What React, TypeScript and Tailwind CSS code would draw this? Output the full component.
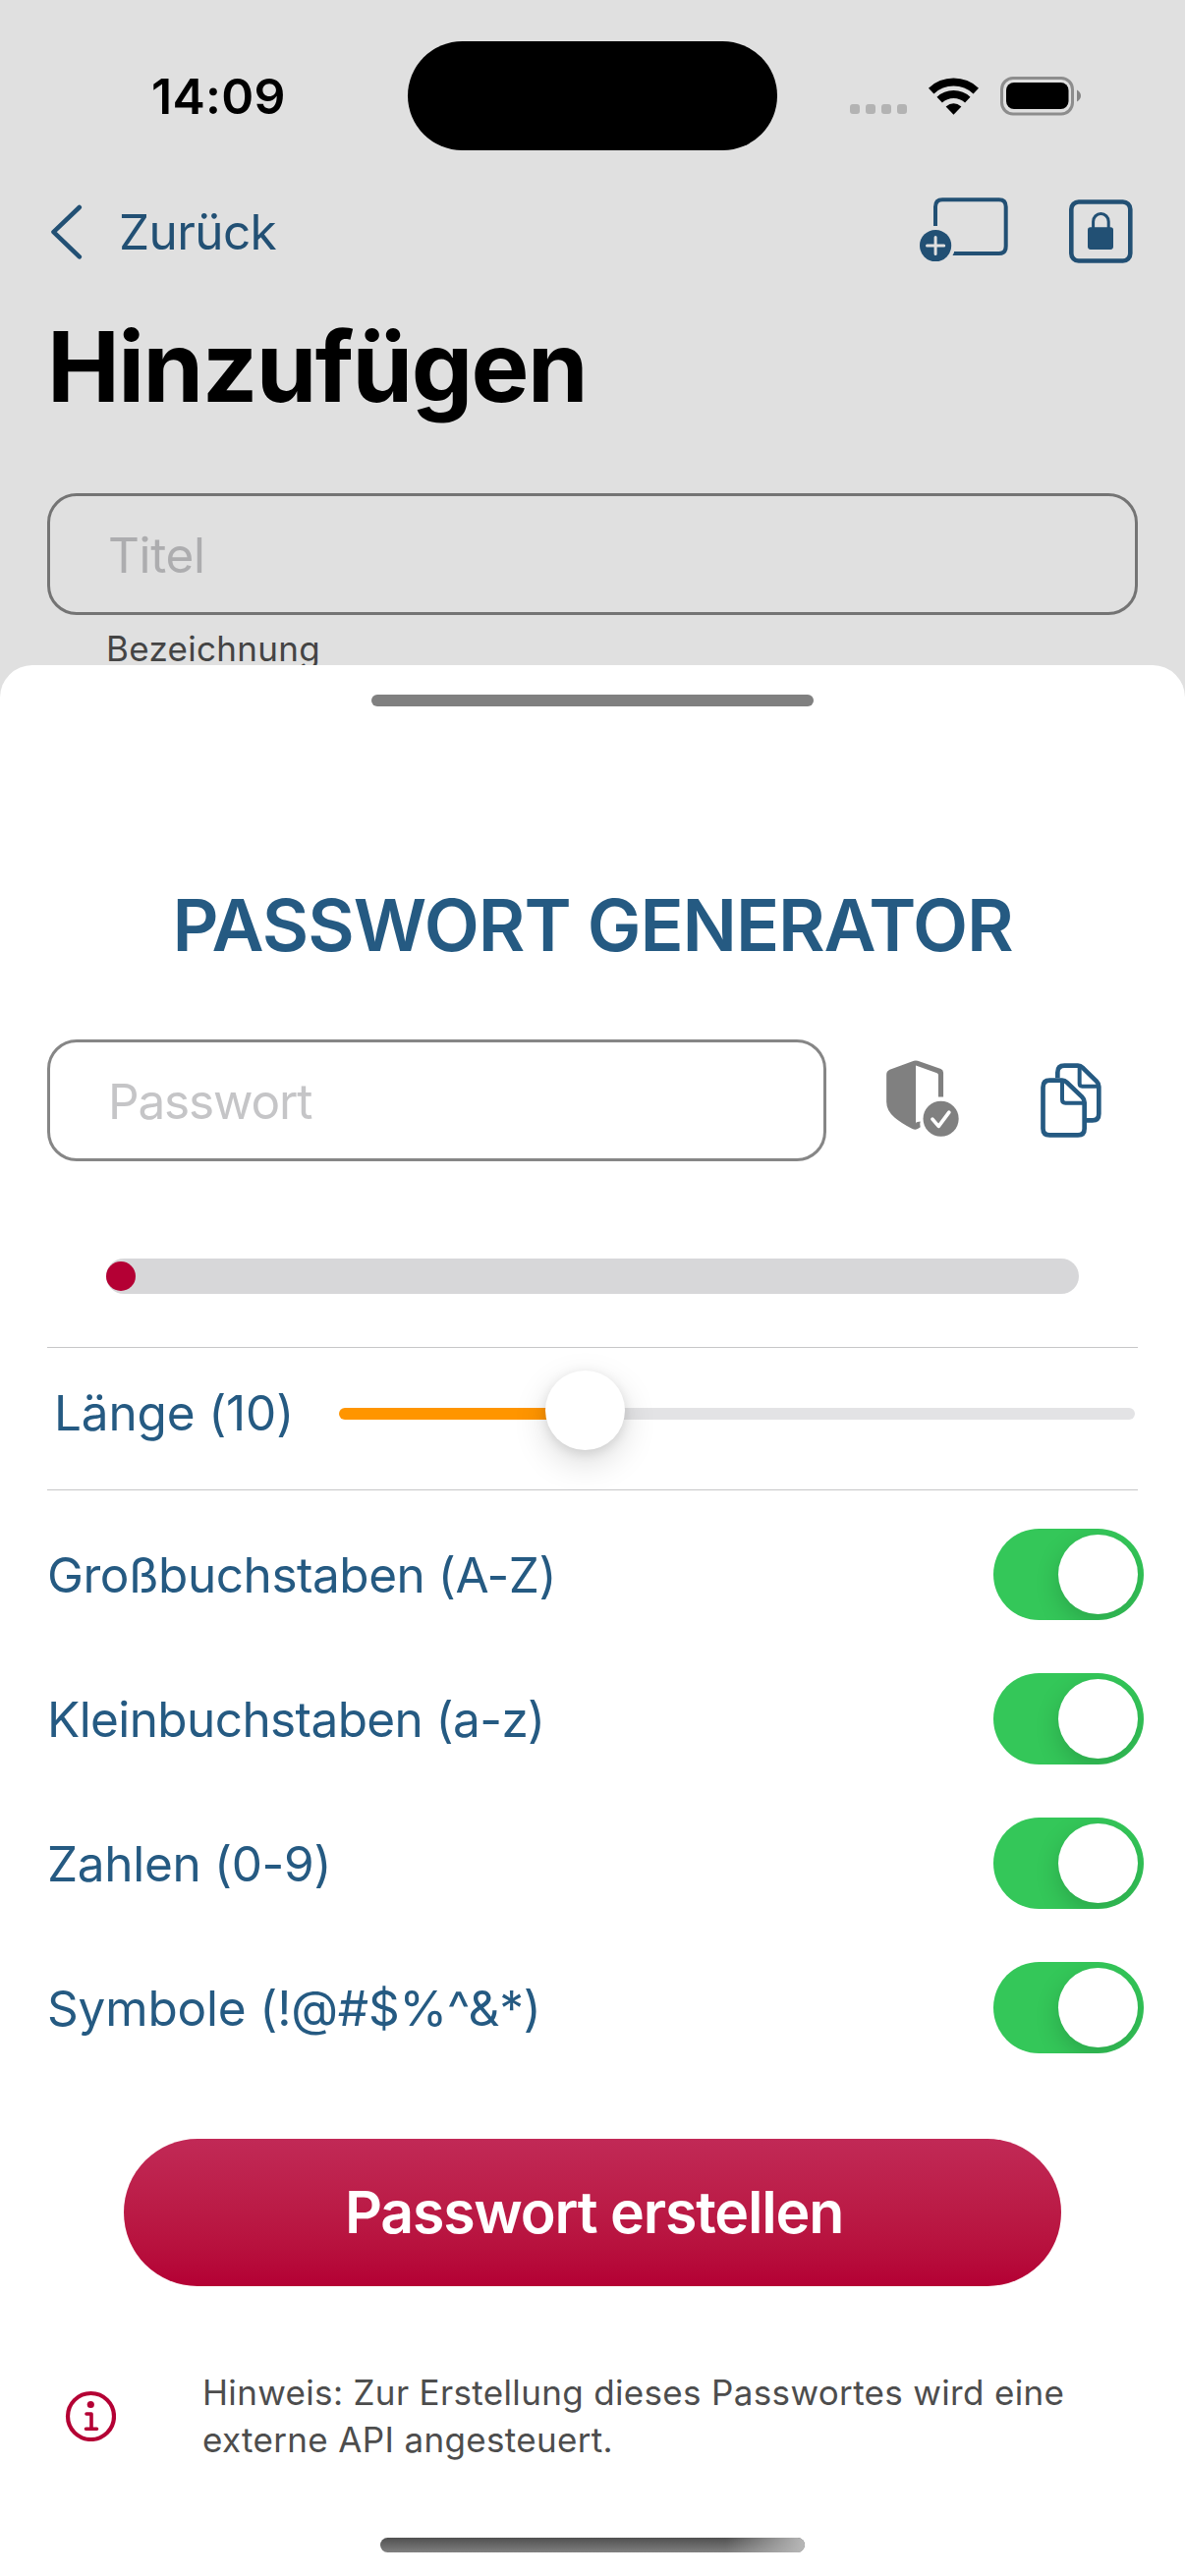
import { useState } from "react";

function StatusBar() {
  return (
    <div className="flex h-[194px] items-center">
      <time className="ml-[154px] mt-[2px] w-[261px] text-[50px] leading-[60px] font-semibold tracking-[0.28px] text-black">
        14:09
      </time>
      <div className="h-[111px] w-[376px] rounded-full bg-black" />
      <div className="mt-[28px] ml-[74px] flex gap-[6px]">
        {[0, 1, 2, 3].map((dot) => (
          <span key={dot} className="size-[10px] rounded-[3px] bg-[#b3b3b3]" />
        ))}
      </div>
      <svg className="mt-[2px] ml-[21px] h-[38px] w-[52px]" viewBox="944 78.5 52 38" fill="none">
        <g stroke="#000" strokeWidth="8">
          <path d="M947.7 92.1a33.4 33.4 0 0 1 45.6 0" />
          <path d="M956.2 101.1a21 21 0 0 1 28.6 0" />
        </g>
        <path d="M962.6 108.1q7.9-6.600 15.8 0l-7.900 8.200z" fill="#000" />
      </svg>
      <svg className="mt-[2px] ml-[21px] h-[40px] w-[84px]" viewBox="1017 78 84 40" fill="none">
        <rect x="1019.5" y="79.5" width="72" height="36.5" rx="11.5" stroke="#8d8d8d" strokeWidth="3" />
        <rect x="1024" y="84" width="63.5" height="27" rx="8" fill="#000" />
        <path d="M1096 91.5q4 2.300 4 6t-4 6z" fill="#858585" />
      </svg>
    </div>
  );
}

function NavBar() {
  return (
    <nav className="flex h-[83px] items-center text-[#225074]">
      <svg className="ml-[51px] h-[56px] w-[34px]" viewBox="51 207.5 34 56" fill="none">
        <path d="M80.8 210.5 54.5 235.6l26.3 25.3" stroke="currentColor" strokeWidth="4.6" strokeLinecap="round" strokeLinejoin="round" />
      </svg>
      <span className="ml-[36px] mr-auto text-[49.5px] leading-[60px] tracking-[-0.6px]">Zurück</span>
      <svg className="mt-[-3px] mr-[61px] h-[66px] w-[91px]" viewBox="936 201 91 66" fill="none">
        <path d="M952 230v-19.5q0-7.200 7.200-7.200h57.5q7 0 7 7.200v40q0 7.500-7 7.500H971" stroke="currentColor" strokeWidth="4" />
        <path d="M969.5 260l2-4h4v4z" fill="currentColor" />
        <circle cx="952.1" cy="250" r="16.100" fill="currentColor" />
        <path d="M943.5 250h17.2M952.1 241.400v17.200" stroke="#e0e0e0" strokeWidth="3" strokeLinecap="round" />
      </svg>
      <svg className="mr-[53px] h-[65px] w-[65px]" viewBox="1088 203 65 65" fill="none">
        <rect x="1090.3" y="205.5" width="60" height="60" rx="7.5" stroke="currentColor" strokeWidth="4.6" />
        <rect x="1107" y="231.3" width="26" height="22.6" rx="2.8" fill="currentColor" />
        <path d="M1112.6 232v-6.500a7.800 8 0 0 1 15.600 0v6.500" stroke="currentColor" strokeWidth="3" />
      </svg>
    </nav>
  );
}

function StrengthIcon() {
  return (
    <svg className="h-[78px] w-[74px]" viewBox="127 118 222 235" fill="none">
      <path
        d="M211 120.500Q217 118 223 120.500L294 145Q301.500 148.500 301.500 157V231H286V163Q286 159.500 282 158L217 134.500V312Q217 309 222 308L231 306Q228 315 231 324Q222 331 216 331Q211 331 205 328Q172 311 152 294Q127 273 127 246V163Q127 152 137 147.500Z"
        fill="#808080"
      />
      <circle cx="294" cy="298" r="54.500" fill="#808080" />
      <path d="M268 299l19 22 32-43" stroke="#fff" strokeWidth="11" strokeLinecap="round" strokeLinejoin="round" />
    </svg>
  );
}

function CopyIcon() {
  return (
    <svg className="h-[76px] w-[62px]" viewBox="599 128 186 228" fill="none" stroke="#255a82" strokeWidth="14">
      <path d="M651 174V157Q651 136 672 136H713Q721 136 727 142L770 184Q777 191 777 200V283Q777 303 757 303H740" />
      <path d="M718 138V191Q718 199 726 199H775" strokeWidth="12" />
      <path d="M606.500 202Q606.500 181 627 181H665Q673 181 679 187L726 232Q733 239 733 249V328Q733 348 713 348H627Q606.500 348 606.500 328Z" />
      <path d="M665 183V240Q665 250 675 250H731" strokeWidth="12" />
    </svg>
  );
}

function Toggle({ on, onToggle, label }: { on: boolean; onToggle: () => void; label: string }) {
  return (
    <button
      type="button"
      role="switch"
      aria-checked={on}
      aria-label={label}
      onClick={onToggle}
      className={
        on
          ? "flex h-[93px] w-[153px] items-center justify-end overflow-hidden rounded-full bg-[#34c759] px-[6px]"
          : "flex h-[93px] w-[153px] items-center justify-start overflow-hidden rounded-full bg-[#e9e9ea] px-[6px]"
      }
    >
      <span className="size-[81px] rounded-full bg-white shadow-[0_9px_24px_rgba(0,0,0,0.17)]" />
    </button>
  );
}

const options = [
  { id: "upper", label: "Großbuchstaben (A-Z)", tracking: "tracking-[-0.46px]" },
  { id: "lower", label: "Kleinbuchstaben (a-z)", tracking: "tracking-[-0.6px]" },
  { id: "digits", label: "Zahlen (0-9)", tracking: "tracking-[-0.32px]" },
  { id: "symbols", label: "Symbole (!@#$%^&*)", tracking: "tracking-[-0.18px]" },
];

function GeneratorSheet() {
  const [enabled, setEnabled] = useState<Record<string, boolean>>({
    upper: true,
    lower: true,
    digits: true,
    symbols: true,
  });

  return (
    <section className="flex h-[1945px] flex-col rounded-t-[33px] bg-white">
      <div className="mx-auto mt-[30px] h-[12px] w-[450px] rounded-full bg-[#808080]" />

      <h2 className="mt-[178px] text-center text-[73px] leading-[90px] font-semibold tracking-[-1.08px] text-[#255a82]">
        PASSWORT GENERATOR
      </h2>

      <div className="mt-[71px] ml-[48px] flex items-center">
        <div className="flex h-[124px] w-[793px] items-center rounded-[30px] border-[3px] border-[#868686] pt-[2px] pl-[59px] text-[49.5px] leading-[60px] tracking-[-1.15px] text-[#c5c5c7]">
          Passwort
        </div>
        <div className="mt-[-4px] ml-[61px]">
          <StrengthIcon />
        </div>
        <div className="ml-[83px]">
          <CopyIcon />
        </div>
      </div>

      <div className="mt-[99px] ml-[108px] flex h-[36px] w-[990px] items-center rounded-full bg-[#d7d7d9]">
        <span className="size-[30px] rounded-full bg-[#b40034]" />
      </div>

      <div className="mx-[48px] mt-[54px] flex h-[146px] items-center border-y border-[#c6c6c8]">
        <span className="mt-[-12px] ml-[7px] w-[290px] text-[49.5px] leading-[60px] tracking-[-0.16px] text-[#255a82]">
          Länge (10)
        </span>
        <div className="mt-[-10px] flex w-[810px] items-center">
          <div className="h-[12px] w-[220px] rounded-l-full bg-[#ff9500]" />
          <div className="relative z-10 mx-[-10px] -mt-[7px] size-[81px] shrink-0 rounded-full bg-white shadow-[0_12px_34px_rgba(0,0,0,0.15),0_3px_12px_rgba(0,0,0,0.1)]" />
          <div className="h-[12px] grow rounded-r-full bg-[#e3e3e5]" />
        </div>
      </div>

      <div className="mt-[12px] flex flex-col">
        {options.map(({ id, label, tracking }) => (
          <div key={id} className="flex h-[147px] items-center justify-between pr-[42px] pl-[48px]">
            <span className={`text-[49.5px] leading-[60px] text-[#255a82] ${tracking}`}>{label}</span>
            <Toggle
              label={label}
              on={enabled[id]}
              onToggle={() => setEnabled((prev) => ({ ...prev, [id]: !prev[id] }))}
            />
          </div>
        ))}
      </div>

      <button
        type="button"
        className="mx-auto mt-[60px] h-[150px] w-[954px] rounded-full bg-linear-to-b from-[#c12956] to-[#b40034] pl-[3px] text-[59px] leading-[150px] font-semibold tracking-[-1.2px] text-white"
      >
        Passwort erstellen
      </button>

      <div className="mt-[84px] flex items-center">
        <svg className="ml-[66px] h-[52px] w-[52px]" viewBox="0 0 52 52" fill="none" stroke="#b40034">
          <circle cx="26.500" cy="26.500" r="23.500" strokeWidth="4.200" />
          <circle cx="26.300" cy="14.500" r="3.600" fill="#b40034" stroke="none" />
          <path d="M22 24h5v15M21.500 39.200h11" strokeWidth="3.600" strokeLinecap="round" strokeLinejoin="round" />
        </svg>
        <p className="ml-[88px] text-[35px] leading-[48px] tracking-[0.34px] text-[#4d4d4d]">
          Hinweis: Zur Erstellung dieses Passwortes wird eine
          <br />
          externe API angesteuert.
        </p>
      </div>

      <div className="mt-[76px] ml-[387px] flex h-[15px] w-[432px] justify-end overflow-hidden rounded-full bg-linear-to-b from-[#505050] to-[#808080]">
        <div className="h-full w-[80px] bg-linear-to-r from-transparent to-[#b8b8b8]" />
      </div>
    </section>
  );
}

export default function App() {
  return (
    <main className="h-[2622px] w-[1206px] overflow-hidden bg-[#e0e0e0] font-['Inter',sans-serif]">
      <div className="h-[677px] overflow-hidden">
        <StatusBar />
        <NavBar />
        <h1 className="mt-[36px] ml-[48px] text-[99px] leading-[120px] font-bold tracking-[-1.59px] text-black">
          Hinzufügen
        </h1>
        <div className="mx-[48px] mt-[69px] flex h-[124px] items-center rounded-[30px] border-[3px] border-[#747474] pt-[2px] pl-[59px] text-[49.5px] leading-[60px] tracking-[-0.38px] text-[#adadaf]">
          Titel
        </div>
        <div className="mt-[10px] ml-[108px] text-[35px] leading-[48px] tracking-[0.3px] text-[#444444]">
          Bezeichnung
        </div>
      </div>
      <GeneratorSheet />
    </main>
  );
}
